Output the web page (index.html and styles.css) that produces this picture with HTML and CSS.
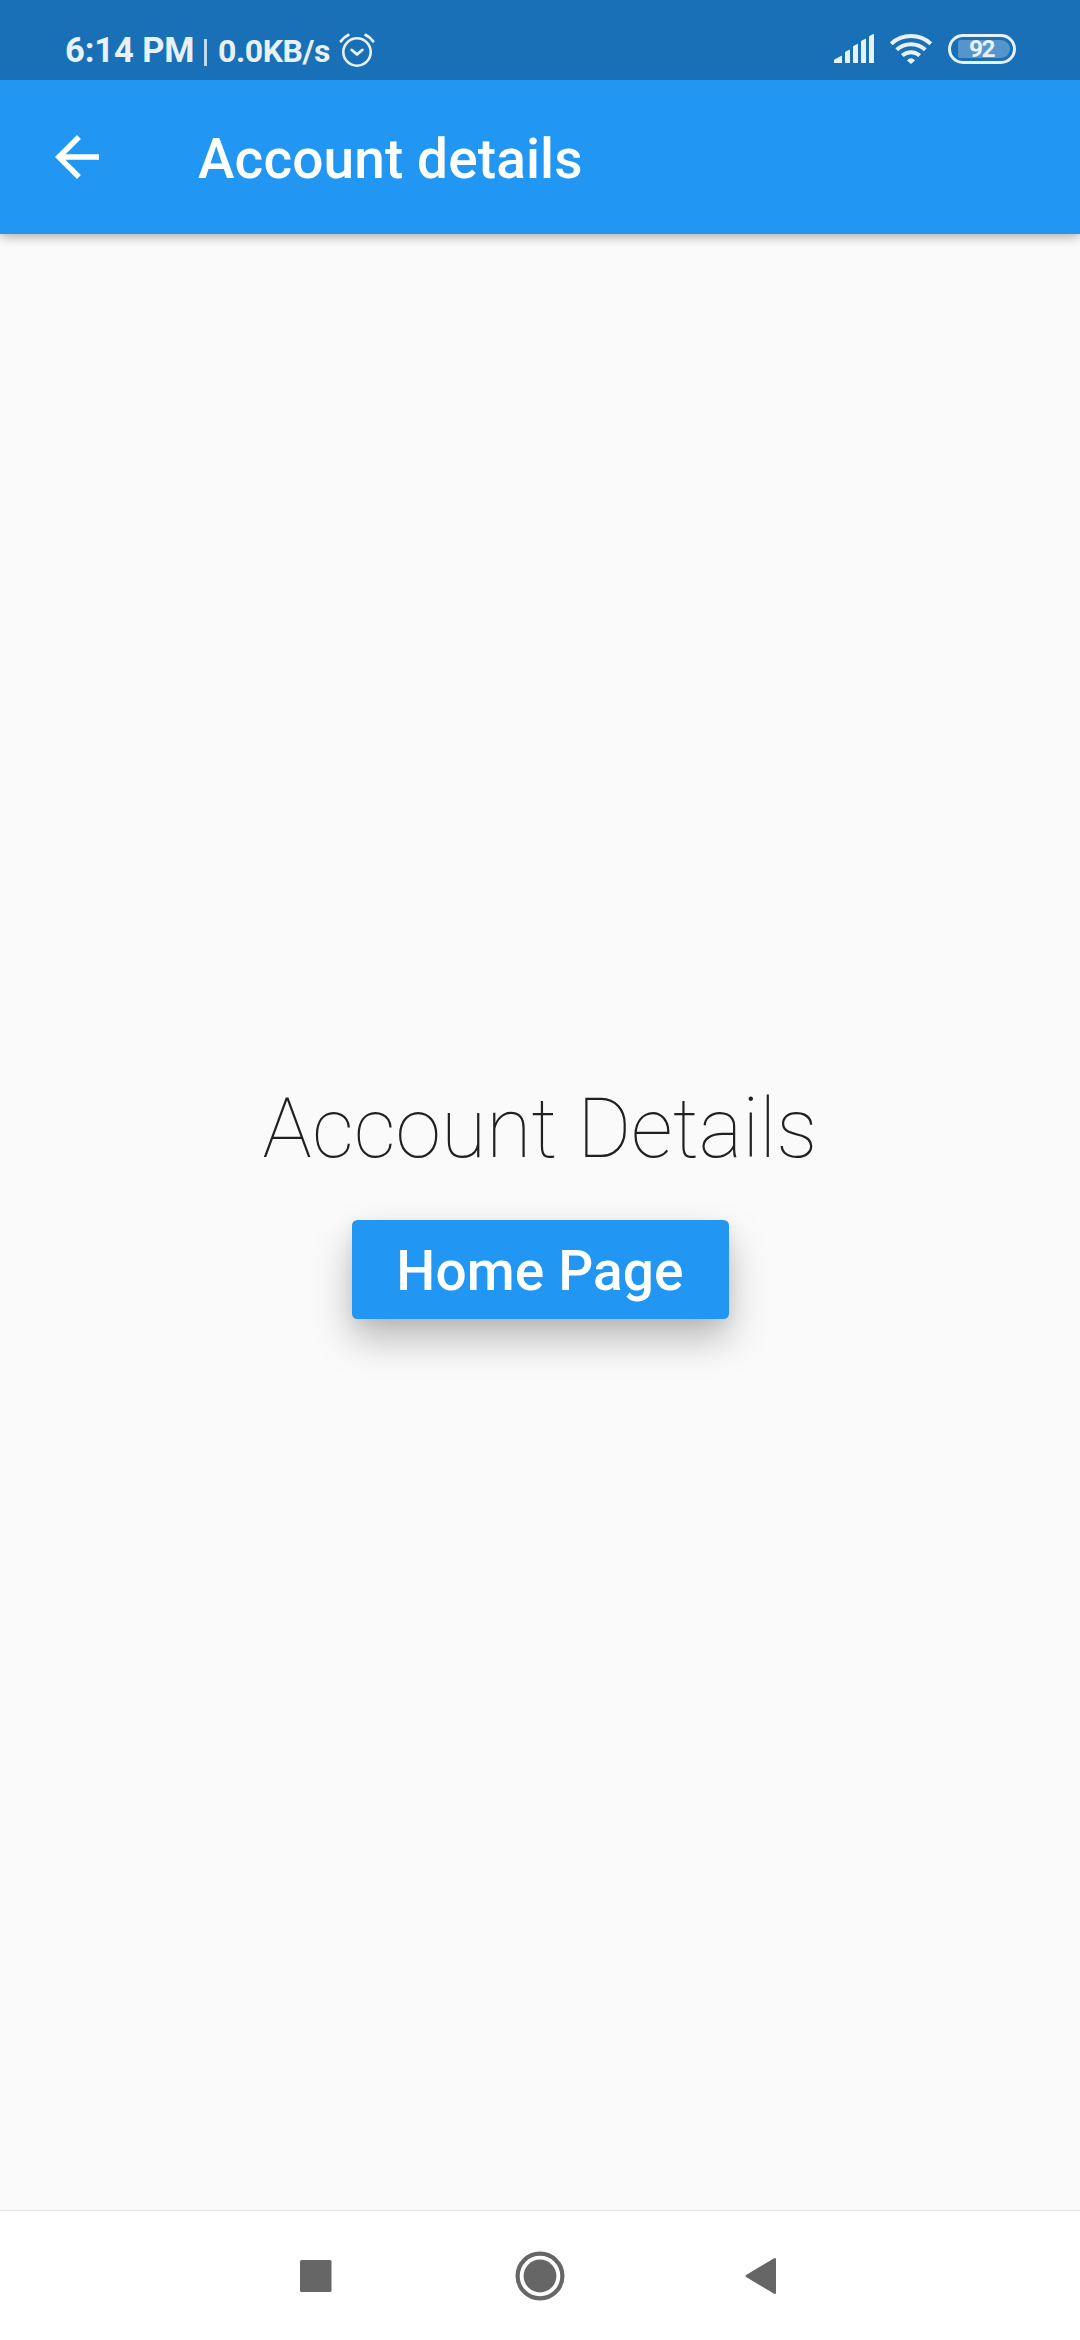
FILE: index.html
```html
<!DOCTYPE html>
<html lang="en">
<head>
<meta charset="utf-8">
<title>Account details</title>
<link rel="stylesheet" href="styles.css">
</head>
<body>
<div class="screen">
  <div class="status-bar">
    <span class="clock">6:14 PM</span>
    <span class="divider"></span>
    <span class="speed">0.0KB/s</span>
    <svg class="alarm" width="36" height="36" viewBox="0 0 36 36" fill="none" stroke="currentColor" stroke-linecap="round">
      <circle cx="18" cy="19" r="13.7" stroke-width="2.6"/>
      <path d="M12.7 17l5.3 4.4 5.3-4.4" stroke-width="2.8" stroke-linejoin="round"/>
      <path d="M2 8.2Q5 4 9.3 2M34 8.2Q31 4 26.7 2" stroke-width="2.9"/>
    </svg>
    <svg class="signal" width="40" height="30" viewBox="0 0 40 30" fill="currentColor">
      <path d="M0 29v-2.5q0-.8.8-1.3L8 21.4V29zM11 29V18.6q0-.8.8-1.2l4.2-1.8V29zM19 29V13.2q0-.9.8-1.4l4.2-2V29zM27 29V8q0-.9.8-1.4L32 4.4V29zM35 29V3.2q0-1 .8-1.5L39 .2q1-.4 1 .6V29z"/>
    </svg>
    <svg class="wifi" width="42" height="32" viewBox="0 0 42 32" fill="none" stroke="currentColor" stroke-width="4">
      <path d="M1.2 10.8a29.2 29.2 0 0 1 39.6 0M6.7 16.8a21.2 21.2 0 0 1 28.6 0M12.3 22.6a13 13 0 0 1 17.4 0"/>
      <path d="M17 27.6Q21 23 25 27.6L21 31z" fill="currentColor" stroke="none"/>
    </svg>
    <div class="battery"><div class="level">92</div></div>
  </div>
  <header class="app-bar">
    <svg width="66" height="66" viewBox="0 0 24 24" fill="#fff"><path d="M20 11H7.83l5.59-5.59L12 4l-8 8 8 8 1.41-1.41L7.83 13H20v-2z"/></svg>
    <span class="title">Account details</span>
  </header>
  <main class="content">
    <h1 class="heading">Account Details</h1>
    <button class="home-button">Home Page</button>
  </main>
  <nav class="nav-bar">
    <svg width="32" height="32" viewBox="0 0 32 32"><rect width="31.5" height="32" rx="1.5" fill="#666"/></svg>
    <svg width="50" height="50" viewBox="0 0 50 50"><circle cx="25" cy="25" r="22.4" fill="none" stroke="#666" stroke-width="4.2"/><circle cx="25" cy="25" r="16.4" fill="#666"/></svg>
    <svg width="32" height="38" viewBox="0 0 32 38"><path d="M1.7 19L29.8 2.2V35.8z" fill="#666" stroke="#666" stroke-width="2.4" stroke-linejoin="round"/></svg>
  </nav>
</div>
</body>
</html>
```
FILE: styles.css
```css
* {
  box-sizing: border-box;
}

body {
  margin: 0;
  font-family: Roboto, sans-serif;
}

.screen {
  display: flex;
  flex-direction: column;
  width: 1080px;
  height: 2340px;
  background: #fafafa;
}

.status-bar {
  position: relative;
  z-index: 1;
  display: flex;
  height: 80px;
  padding: 32px 64px 0 65px;
  background: #1a70b7;
  color: #e8f0f8;
  font-weight: 700;
}

.clock {
  width: 139px;
  font-size: 34.5px;
  line-height: 36px;
  letter-spacing: -0.1px;
  white-space: nowrap;
}

.divider {
  width: 3px;
  height: 27px;
  margin: 7px 11px 0 0;
  background: #c3d9ec;
}

.speed {
  width: 121px;
  font-size: 32px;
  line-height: 38px;
  letter-spacing: -0.45px;
  white-space: nowrap;
}

.alarm {
  margin-top: 1px;
}

.signal {
  margin: 2px 16px 0 auto;
}

.wifi {
  margin: 1px 16px 0 0;
}

.battery {
  width: 68px;
  height: 30px;
  margin-top: 2px;
  padding: 3px;
  border: 3px solid #e8f0f8;
  border-radius: 15px;
}

.level {
  width: 52px;
  height: 18px;
  margin-left: 4px;
  padding-right: 5px;
  border-radius: 2px 9px 9px 2px;
  background: #5595cb;
  font-size: 24.5px;
  line-height: 18px;
  letter-spacing: -1.5px;
  text-align: center;
}

.app-bar {
  display: flex;
  align-items: center;
  height: 154px;
  padding: 0 44px;
  gap: 88px;
  background: #2196f3;
  box-shadow: 0 2px 11px rgba(0, 0, 0, 0.35);
  color: #fff;
}

.title {
  padding-top: 3px;
  font-size: 55px;
  font-weight: 500;
  line-height: 64px;
  letter-spacing: 0.1px;
}

.content {
  flex: 1;
  display: flex;
  flex-direction: column;
  align-items: center;
  padding-top: 846px;
}

.heading {
  margin: 0 0 43px;
  color: #202020;
  font-size: 82.5px;
  font-weight: 100;
  line-height: 97px;
}

.home-button {
  width: 377px;
  height: 99px;
  padding: 4px 0 0;
  border: 0;
  border-radius: 5.5px;
  background: #2196f3;
  box-shadow: 0 20px 38px rgba(0, 0, 0, 0.26), 0 4px 14px rgba(0, 0, 0, 0.06);
  color: #fff;
  font: 500 55px/95px Roboto, sans-serif;
  letter-spacing: 0.1px;
}

.nav-bar {
  display: grid;
  grid-template-columns: 32px 50px 32px;
  justify-content: center;
  align-items: center;
  height: 130px;
  border-top: 1px solid #e3e3e3;
  background: #fff;
  column-gap: 183px;
}

.nav-bar svg:last-child {
  margin-left: -3px;
}
```
